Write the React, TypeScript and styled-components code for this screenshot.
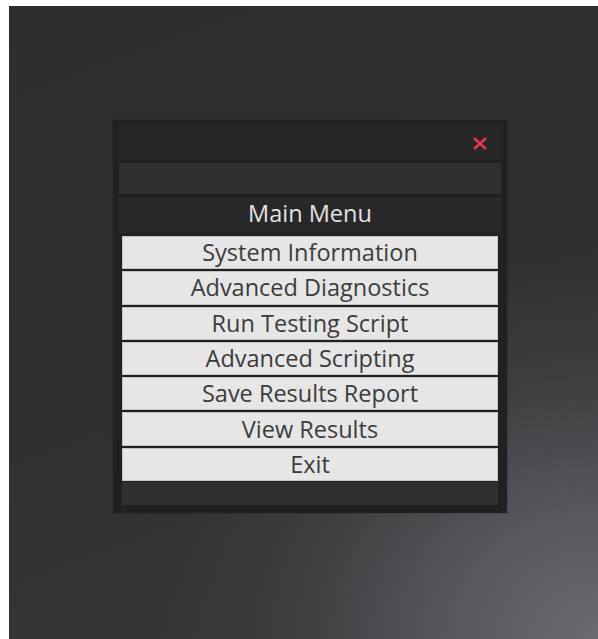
import React from "react";
import styled, { createGlobalStyle } from "styled-components";

const GlobalStyle = createGlobalStyle`
  html, body {
    margin: 0;
    padding: 0;
    background: #fff;
  }
  body {
    padding: 6px 0 0 9px;
    font-family: "Open Sans", "Noto Sans", sans-serif;
  }
`;

const Desktop = styled.div`
  width: 589px;
  height: 633px;
  box-sizing: border-box;
  padding: 114px 0 0 104px;
  background:
    radial-gradient(ellipse 440px 380px at 100% 100%, #6c6a6f 0%, #57565b 35%, #3d3c3f 70%, rgba(46, 46, 48, 0) 100%),
    linear-gradient(160deg, #2e2e30 0%, #303032 50%, #38383a 100%);
`;

const Window = styled.div`
  width: 394px;
  box-sizing: border-box;
  background: #212121;
  padding: 5px 6px 8px;
  display: flex;
  flex-direction: column;
  box-shadow: 0 0 2px rgba(0, 0, 0, 0.3);
`;

const TitleBar = styled.div`
  height: 35px;
  background: #272727;
  display: flex;
  align-items: center;
  justify-content: flex-end;
  padding-right: 13px;
`;

const CloseButton = styled.button`
  border: 0;
  padding: 0;
  margin-top: 1px;
  background: none;
  width: 16px;
  height: 13px;
  display: flex;
  cursor: pointer;
`;

const Strip = styled.div<{ $h: number }>`
  height: ${(p) => p.$h}px;
  background: #303030;
  margin-top: 3px;
`;

const Header = styled.div`
  height: 36px;
  margin-top: 3px;
  background: #282828;
  color: #e2e2e2;
  font-size: 23.5px;
  display: flex;
  align-items: center;
  justify-content: center;
  padding-bottom: 5px;
  box-sizing: border-box;
`;

const MenuList = styled.div`
  display: flex;
  flex-direction: column;
  gap: 2px;
  padding: 3px 3px 0;
`;

const MenuButton = styled.button`
  height: 33.3px;
  margin: 0;
  padding: 0;
  border: 1px solid #c4c4c4;
  background: #e6e6e6;
  color: #3c3c3c;
  font-family: "Open Sans", "Noto Sans", sans-serif;
  font-size: 23.5px;
  line-height: 31px;
  text-align: center;
  cursor: pointer;
`;

const Footer = styled.div`
  height: 23px;
  margin: 1px 3px 0;
  background: #303030;
`;

const items = [
  "System Information",
  "Advanced Diagnostics",
  "Run Testing Script",
  "Advanced Scripting",
  "Save Results Report",
  "View Results",
  "Exit",
];

export default function App() {
  return (
    <>
      <GlobalStyle />
      <Desktop>
        <Window>
          <TitleBar>
            <CloseButton aria-label="Close">
              <svg width="16" height="13" viewBox="0 0 16 13">
                <path d="M2 1 L14 12 M14 1 L2 12" stroke="#e5384f" strokeWidth="2.6" strokeLinecap="butt" />
              </svg>
            </CloseButton>
          </TitleBar>
          <Strip $h={31} />
          <Header>Main Menu</Header>
          <MenuList>
            {items.map((label) => (
              <MenuButton key={label}>{label}</MenuButton>
            ))}
          </MenuList>
          <Footer />
        </Window>
      </Desktop>
    </>
  );
}
